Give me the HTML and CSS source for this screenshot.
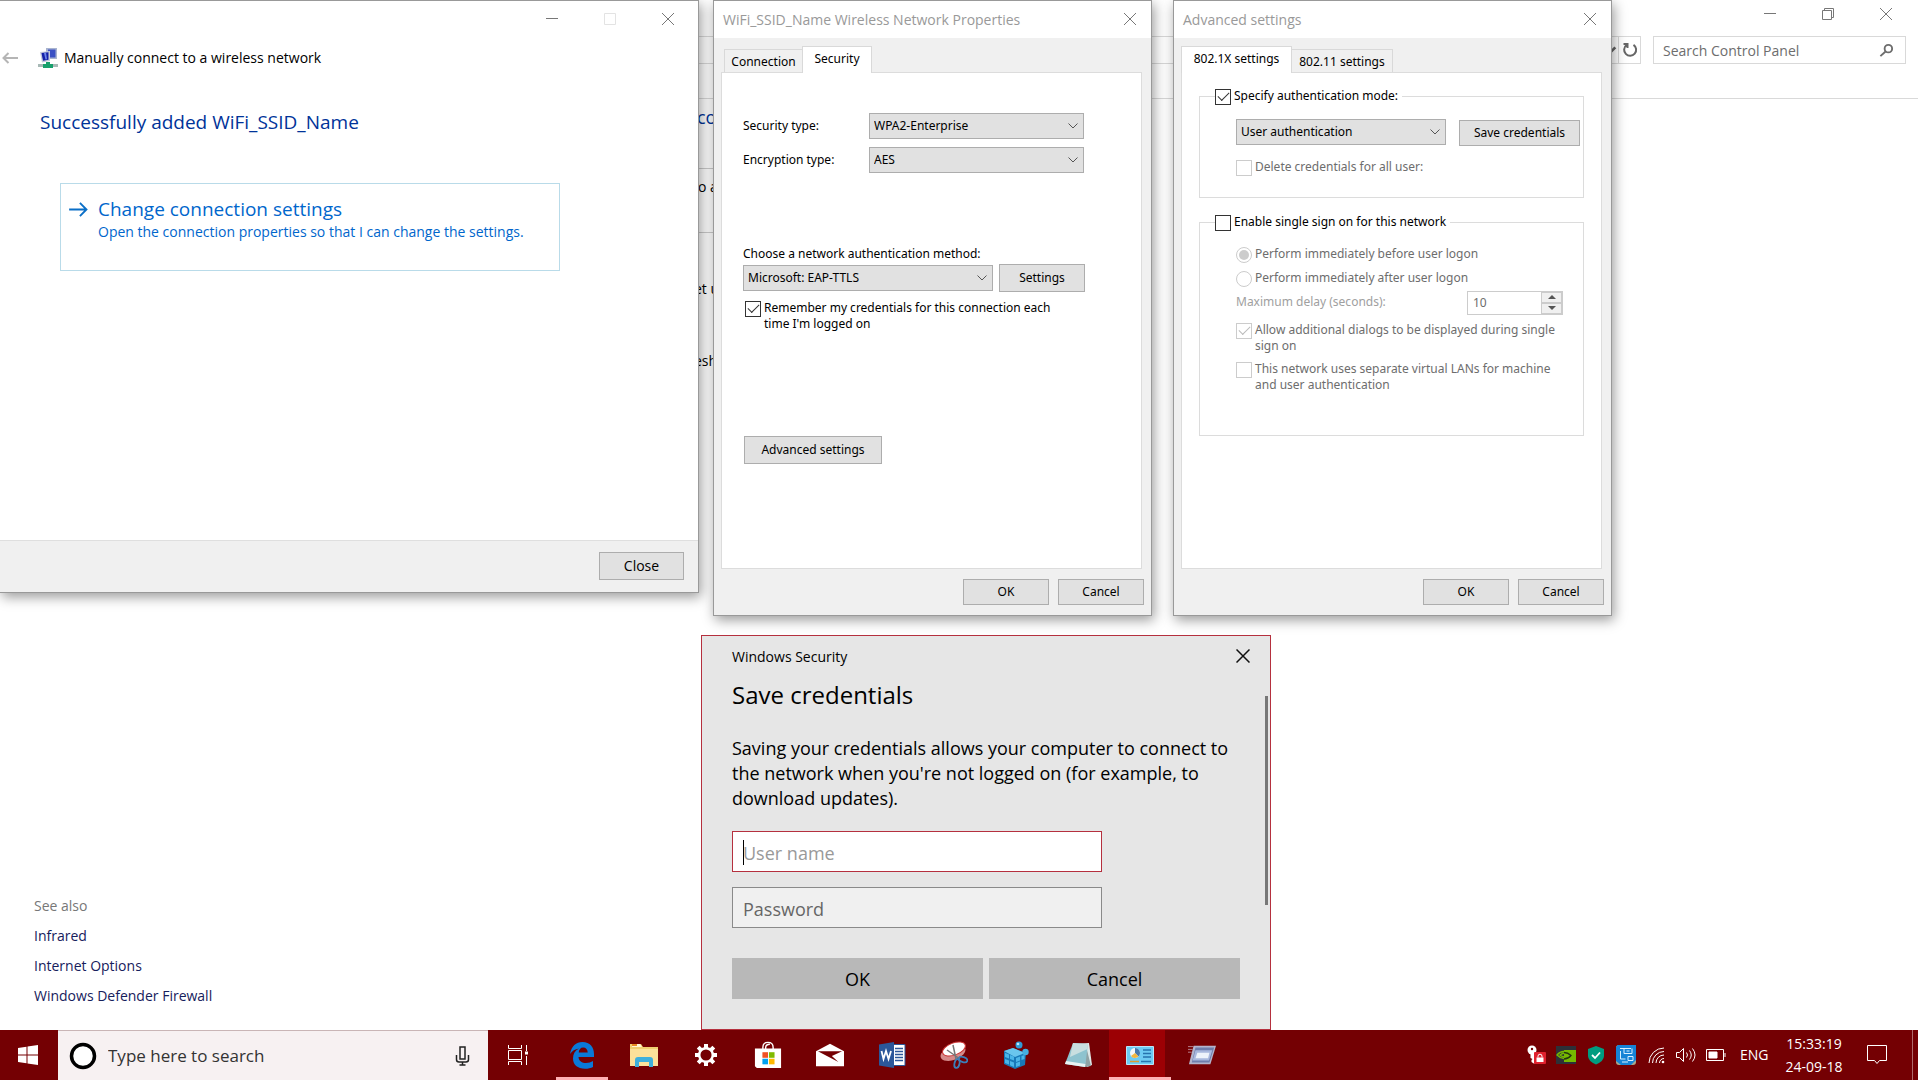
FILE: index.html
```html
<!DOCTYPE html>
<html lang="en">
<head>
<meta charset="utf-8">
<title>Wireless network setup</title>
<link rel="stylesheet" href="styles.css">
</head>
<body>
<main class="desktop">

  <section class="explorer" aria-label="Control Panel">
    <header class="explorer-head">
      <div class="caption">
        <button class="cap" aria-label="Minimise"><svg viewBox="0 0 12 12"><path d="M0 5.500h12"/></svg></button>
        <button class="cap" aria-label="Restore"><svg viewBox="0 0 12 12"><path d="M.5 2.500h9v9h-9zM2.500 2.500v-2h9v9h-2"/></svg></button>
        <button class="cap" aria-label="Close window"><svg viewBox="0 0 12 12"><path d="M0 0l12 12M12 0L0 12"/></svg></button>
      </div>
      <div class="address-row">
        <div class="address">
          <button class="addr-btn history" aria-label="Previous locations"><svg viewBox="0 0 12 12"><path d="M2 4l4 4 4-4"/></svg></button>
          <button class="addr-btn refresh" aria-label="Refresh"><svg viewBox="0 0 16 16"><path d="M11.500 2.800A6 6 0 1 1 4.500 3M1.500 2h4v4"/></svg></button>
        </div>
        <label class="search"><input type="text" placeholder="Search Control Panel" aria-label="Search Control Panel">
          <svg viewBox="0 0 16 16"><circle cx="10" cy="6" r="4"/><path d="M7 9l-5.500 5"/></svg></label>
      </div>
    </header>
    <div class="explorer-body">
      <nav class="see-also" aria-labelledby="see-also">
        <h2 id="see-also">See also</h2>
        <a href="#">Infrared</a>
        <a href="#">Internet Options</a>
        <a href="#">Windows Defender Firewall</a>
      </nav>
      <div class="network">
        <h1>co</h1>
        <p class="net-row first">o a</p>
        <p class="net-row second">et u</p>
        <p class="net-row third">esh</p>
      </div>
    </div>
  </section>

  <section class="window wizard">
    <div class="caption">
      <button class="cap" aria-label="Minimise"><svg viewBox="0 0 12 12"><path d="M0 5.500h12"/></svg></button>
      <button class="cap" disabled aria-label="Maximise"><svg viewBox="0 0 12 12"><path d="M.5.5h11v11H.5z"/></svg></button>
      <button class="cap" aria-label="Close wizard"><svg viewBox="0 0 12 12"><path d="M0 0l12 12M12 0L0 12"/></svg></button>
    </div>
    <div class="wizard-title">
      <button class="back" disabled aria-label="Back"><svg viewBox="0 0 16 12"><path d="M16 6H1M6.500 1l-5 5 5 5"/></svg></button>
      <svg class="net-icon" viewBox="0 0 20 20"><path d="M8 0h11v11H8z" fill="#a9b4cf"/><path d="M10 1.500h7.500v8H10z" fill="#3a50c4"/><path d="M2 4l10-1v10l-8 1.500z" fill="#c5cbdc"/><path d="M3.500 5l7-.8v7.600l-5.500 1z" fill="#1420a8"/><path d="M6 5l2-.3 1 6.500-1.500.3z" fill="#6e86ea"/><path d="M0 16h20v3H0z" fill="#a8b9b6"/><path d="M8 14h4v2h3v4H5v-4h3z" fill="#18a06c"/></svg>
      <span>Manually connect to a wireless network</span>
    </div>
    <div class="wizard-body">
      <h2>Successfully added WiFi_SSID_Name</h2>
      <button class="command">
        <svg viewBox="0 0 20 16"><path d="M0 8h18M11.500 1l7 7-7 7"/></svg>
        <span class="command-text"><span class="command-title">Change connection settings</span>
        <span>Open the connection properties so that I can change the settings.</span></span>
      </button>
    </div>
    <footer><button class="btn">Close</button></footer>
  </section>

  <section class="window props network-props">
    <header><h2>WiFi_SSID_Name Wireless Network Properties</h2>
      <button class="cap" aria-label="Close properties"><svg viewBox="0 0 12 12"><path d="M0 0l12 12M12 0L0 12"/></svg></button></header>
    <div class="tabs" role="tablist">
      <button class="tab" role="tab">Connection</button>
      <button class="tab selected" role="tab" aria-selected="true">Security</button>
    </div>
    <div class="panel security">
      <div class="pairs">
        <label for="sec">Security type:</label><select id="sec"><option>WPA2-Enterprise</option></select>
        <label for="enc">Encryption type:</label><select id="enc"><option>AES</option></select>
      </div>
      <label class="method-label" for="method">Choose a network authentication method:</label>
      <div class="method">
        <select id="method"><option>Microsoft: EAP-TTLS</option></select>
        <button class="btn">Settings</button>
      </div>
      <label class="check"><input type="checkbox" checked><span>Remember my credentials for this connection each time I'm logged on</span></label>
      <button class="btn advanced">Advanced settings</button>
    </div>
    <footer><button class="btn">OK</button><button class="btn">Cancel</button></footer>
  </section>

  <section class="window props advanced-props">
    <header><h2>Advanced settings</h2>
      <button class="cap" aria-label="Close advanced settings"><svg viewBox="0 0 12 12"><path d="M0 0l12 12M12 0L0 12"/></svg></button></header>
    <div class="tabs" role="tablist">
      <button class="tab selected" role="tab" aria-selected="true">802.1X settings</button>
      <button class="tab" role="tab">802.11 settings</button>
    </div>
    <div class="panel modes">
      <fieldset class="auth">
        <legend><label class="check"><input type="checkbox" checked><span>Specify authentication mode:</span></label></legend>
        <div class="mode">
          <select aria-label="Authentication mode"><option>User authentication</option></select>
          <button class="btn">Save credentials</button>
        </div>
        <label class="check off"><input type="checkbox" disabled><span>Delete credentials for all user:</span></label>
      </fieldset>
      <fieldset class="sso">
        <legend><label class="check"><input type="checkbox"><span>Enable single sign on for this network</span></label></legend>
        <label class="check off"><input type="radio" name="when" checked disabled><span>Perform immediately before user logon</span></label>
        <label class="check off"><input type="radio" name="when" disabled><span>Perform immediately after user logon</span></label>
        <div class="delay">
          <label for="delay">Maximum delay (seconds):</label>
          <div class="spinner">
            <input id="delay" type="text" value="10" disabled>
            <span class="steps"><button disabled aria-label="More">
              <svg viewBox="0 0 8 4"><path d="M0 4l4-4 4 4z"/></svg></button><button disabled aria-label="Less">
              <svg viewBox="0 0 8 4"><path d="M0 0l4 4 4-4z"/></svg></button></span>
          </div>
        </div>
        <label class="check off"><input type="checkbox" checked disabled><span>Allow additional dialogs to be displayed during single sign on</span></label>
        <label class="check off"><input type="checkbox" disabled><span>This network uses separate virtual LANs for machine and user authentication</span></label>
      </fieldset>
    </div>
    <footer><button class="btn">OK</button><button class="btn">Cancel</button></footer>
  </section>

  <section class="credentials">
    <header><span>Windows Security</span>
      <button class="cap" aria-label="Close Windows Security"><svg viewBox="0 0 14 14"><path d="M.5.5l13 13M13.500.5l-13 13"/></svg></button></header>
    <h2>Save credentials</h2>
    <p>Saving your credentials allows your computer to connect to the network when you're not logged on (for example, to download updates).</p>
    <label class="field focused"><input type="text" placeholder="User name" aria-label="User name"></label>
    <label class="field"><input type="password" placeholder="Password" aria-label="Password"></label>
    <div class="choices"><button>OK</button><button>Cancel</button></div>
    <i class="scroll-thumb"></i>
  </section>
</main>

<footer class="taskbar">
  <button class="start" aria-label="Start"><svg viewBox="0 0 20 20"><path d="M0 3l8.500-1.200v7.700H0zM9.500 1.600L20 0v9.500H9.500zM0 10.500h8.500v7.700L0 17zM9.500 10.500H20V20L9.500 18.400z" fill="#fff"/></svg></button>
  <label class="task-search">
    <svg class="cortana" viewBox="0 0 28 28"><circle cx="14" cy="14" r="11.500" fill="#fff" stroke="#000" stroke-width="3.500"/></svg>
    <input type="text" placeholder="Type here to search" aria-label="Type here to search">
    <svg class="mic" viewBox="0 0 14 20"><path d="M4.500 1h5v12h-5zM1 9v4.500q0 2.500 2.500 2.500h7q2.500 0 2.500-2.500V9M7 16v3M4 19h6"/></svg>
  </label>
  <div class="apps">
    <button class="task-view" aria-label="Task view"><svg viewBox="0 0 22 20"><path d="M1.500 5.500h13v9h-13zM1.500 0v3.500h13V0M1.500 20v-3.500h13V20M19.500 0v6M19.500 11v9" fill="none" stroke="#fff"/><path d="M18 6.500h3v3h-3z" fill="#fff"/></svg></button>
    <button class="app running" aria-label="Edge"><svg viewBox="0 0 28 28"><path d="M2 13C3.500 5 8 1 14.500 1 22 1 26 6 26 13v3H10.500c.3 4 3.500 6 7.500 6 2.800 0 5-.7 7-2v6c-2 1.200-5 1.800-8 1.800C9.500 27.800 5 23.500 5 17.500c0-4.500 2-8 6-10C7 8 4 10 2 13zm8.700-1.500h9c0-3-1.700-5-4.500-5s-4.200 2-4.500 5z" fill="#0a79d8"/></svg></button>
    <button class="app" aria-label="File Explorer"><svg viewBox="0 0 28 28"><path d="M0 3h11l2 3h15v19H0z" fill="#f0cf72"/><path d="M2 3h8l2 3H2z" fill="#fff5d5"/><path d="M2 3h5v2H2z" fill="#e88b24"/><path d="M0 8h28v17H0z" fill="#fce19a"/><path d="M5 26v-7q0-3 3-3h12q3 0 3 3v7h-4v-5H9v5z" fill="#3fb0dc"/></svg></button>
    <button class="app" aria-label="Settings"><svg viewBox="0 0 28 28"><circle cx="14" cy="14" r="6.800" fill="none" stroke="#fff" stroke-width="2.500"/><g stroke="#fff" stroke-width="4"><path d="M14 3v4M14 21v4M3 14h4M21 14h4M6.200 6.200l2.800 2.800M19 19l2.800 2.800M6.200 21.800L9 19M19 9l2.800-2.800"/></g></svg></button>
    <button class="app" aria-label="Store"><svg viewBox="0 0 30 30"><path d="M9.500 10V7q0-5.500 5.500-5.500T20.500 7v3M12.500 9V7q0-3.500 4.500-3.500" fill="none" stroke="#fff" stroke-width="1.500"/><path d="M1 8h28v21H3l-2-2z" fill="#fff"/><path d="M9 12h6v6H9z" fill="#f05125"/><path d="M16 12h6v6h-6z" fill="#7fba00"/><path d="M9 19h6v6H9z" fill="#00a1f1"/><path d="M16 19h6v6h-6z" fill="#ffb900"/></svg></button>
    <button class="app" aria-label="Mail"><svg viewBox="0 0 30 26"><path d="M0 9L15 1l15 8v16H0z" fill="#fff"/><path d="M2 9h26L17 14l7 6.500L2 9z" fill="#740003"/></svg></button>
    <button class="app" aria-label="Word"><svg viewBox="0 0 28 28"><path d="M14 3.500h13v21H14z" fill="#fff" stroke="#2b579a"/><path d="M17 7.500h8M17 10.500h8M17 13.500h8M17 16.500h8M17 19.500h8" stroke="#2b579a" stroke-width="1.500"/><path d="M1 3.500L16 1v26L1 24.500z" fill="#2b579a"/><path d="M3.500 10l2 8 2.500-8 2.500 8 2.500-8" fill="none" stroke="#fff" stroke-width="1.800"/></svg></button>
    <button class="app" aria-label="Snipping Tool"><svg viewBox="0 0 28 28"><ellipse cx="13" cy="12" rx="13" ry="7" transform="rotate(-20 13 12)" fill="#d58a8a"/><ellipse cx="14" cy="8" rx="12" ry="6" transform="rotate(-20 14 8)" fill="#fff" stroke="#c33"/><path d="M13 4l3 14M7 9l13 9" stroke="#777" stroke-width="1.500"/><g fill="none" stroke="#3b7fb8" stroke-width="1.800"><ellipse cx="17" cy="22.500" rx="2.500" ry="4.500" transform="rotate(12 17 22.500)"/><ellipse cx="23" cy="18.500" rx="4.500" ry="2.500" transform="rotate(20 23 18.500)"/></g></svg></button>
    <button class="app" aria-label="Registry Editor"><svg viewBox="0 0 28 28"><path d="M2 10l9-3 13 5-1 12-10 4-11-5z" fill="#1879b8"/><path d="M2 10l9-3 12 5-10 4z" fill="#6ac6ee"/><path d="M3 12l4 1.600v4L3 16zM8 14l4 1.500v4L8 18zM3 18l4 1.500v4L3 22zM8 20l4 1.500v4.500l-4-1.800zM14 17l4-1.500v4L14 21zM14 22l4-1.500v4L14 26zM19.500 15l3-1v4l-3 1z" fill="#4bb5e8"/><circle cx="17" cy="4" r="3.500" fill="#2f9bd6"/><circle cx="23.500" cy="11" r="3.200" fill="#46aee0"/><circle cx="16" cy="3" r="1.300" fill="#bfe8fa"/></svg></button>
    <button class="app" aria-label="Notepad"><svg viewBox="0 0 28 28"><path d="M10 3l15-1 3 22-5 2z" fill="#dfe8e8"/><path d="M22 5l5 20-6 1z" fill="#8fa3a6"/><path d="M9 2l15 1-3 23L1 23z" fill="#8ec3cf"/><path d="M9 2l15 1-.5 5L6 16z" fill="#c9dfe0"/><path d="M1 23l20 3 .5-3L2 20z" fill="#e9f2f2"/></svg></button>
    <button class="app running active" aria-label="Control Panel"><svg viewBox="0 0 28 28"><path d="M.5 5.500h27v18H.5z" fill="#6dcbf3" stroke="#b9e6f9"/><circle cx="9" cy="12" r="5" fill="#f2f7fa"/><path d="M9 12V7a5 5 0 0 1 3.500 8.500z" fill="#4478ad"/><path d="M9 12l3.500 3.500A5 5 0 0 1 5 15z" fill="#f3b73f"/><path d="M17 9h8M17 12.500h8M17 16h8" stroke="#2674ae" stroke-width="1.500"/><path d="M4 20.500h9" stroke="#d99b34" stroke-width="1.500"/><path d="M15 20.500h10" stroke="#2674ae" stroke-width="1.500"/></svg></button>
    <button class="app" aria-label="Run"><svg viewBox="0 0 30 28"><path d="M6 4h24l-6 20H1z" fill="#b3b4cc"/><path d="M8 6h20l-5 16H4z" fill="#6f7dab"/><path d="M8 9h18l-3.500 11H5z" fill="#a8b8de"/><path d="M10 11.500h13l-1.500 6H8z" fill="#eef3fb"/><path d="M0 5h6M0 8h5M0 11h4" stroke="#b98793"/></svg></button>
  </div>
  <div class="tray">
    <svg viewBox="0 0 20 20"><circle cx="6" cy="5" r="4.500" fill="#fff"/><path d="M4.500 8h4v11l-3-2v-2l1-1-2-1z" fill="#fff"/><circle cx="6" cy="4" r="1.200" fill="#740003"/><rect x="8" y="7" width="12" height="12" rx="1" fill="#e0202d"/><path d="M10.500 12.500h7V17h-7z" fill="#fff"/><path d="M12 12.500v-1.300a2 2 0 0 1 4 0v1.300" fill="none" stroke="#fff"/></svg>
    <svg viewBox="0 0 20 20"><path d="M0 1h20v18H0z" fill="#2d3038"/><path d="M8 5h12v12H8z" fill="#76b900"/><path d="M1 10q6-7 14 0-7 7-14 0zM4 10q4-3.500 8 0-4 3.500-8 0z" fill="none" stroke="#76b900" stroke-width="1.300"/><path d="M8 7.500q4 0 7 3-3 3.500-7 3.500" fill="none" stroke="#24340e" stroke-width="1.300"/></svg>
    <svg viewBox="0 0 20 20"><path d="M10 1l8 3v7q0 5-8 8.500Q2 16 2 11V4z" fill="#009c80"/><path d="M6 10l3 3 5-5.500" fill="none" stroke="#fff" stroke-width="1.800"/></svg>
    <svg viewBox="0 0 20 20"><rect width="20" height="20" rx="3" fill="#a8a98c"/><path d="M2 0h18v15l-5 5H5L0 16V2z" fill="#1683d6"/><path d="M4 3.500h11M8 3.500v5h8v-5M4.500 6v8h5M12 11.500h5v4h-5zM6 17h6M10.500 6h3" fill="none" stroke="#d9efff"/></svg>
    <svg viewBox="0 0 20 20" class="line"><path d="M3 18A15 15 0 0 1 18 3M6.500 18A11.500 11.500 0 0 1 18 6.500M10 18a8 8 0 0 1 8-8M13.500 18a4.500 4.500 0 0 1 4.500-4.500"/><circle cx="17" cy="17" r="1.300" fill="#fff" stroke="none"/></svg>
    <svg viewBox="0 0 20 20" class="line"><path d="M.5 7.500h3l4-4v13l-4-4h-3zM10.500 7.500q2 2.500 0 5M13.500 5.500q3.500 4.500 0 9M16.500 3.500q5 6.500 0 13"/></svg>
    <svg viewBox="0 0 20 20" class="line"><path d="M.5 4.500h17v11H.5zM19 8v4"/><path d="M3 7h8v6H3z" fill="#fff"/></svg>
    <span class="lang">ENG</span>
    <time class="clock"><span>15:33:19</span><span>24-09-18</span></time>
    <button class="notices" aria-label="Notifications"><svg viewBox="0 0 20 20"><path d="M.5.5h19v15h-7l-2.500 3-2.500-3h-7z" fill="none" stroke="#fff"/></svg></button>
    <span class="peek"></span>
  </div>
</footer>
</body>
</html>
```
FILE: styles.css
```css
* { box-sizing: border-box; }
html, body { margin: 0; }
body {
  display: flex;
  flex-direction: column;
  min-height: 100vh;
  overflow: hidden;
  background: #fff;
  color: #000;
  font: 14px/20px "Open Sans", "Noto Sans", sans-serif;
}
h1, h2, p, fieldset, legend { margin: 0; padding: 0; font-weight: 400; }
button, input, select { margin: 0; padding: 0; border: 0; border-radius: 0; background: none; color: inherit; font: inherit; }
svg { display: block; flex: none; }
a { color: inherit; text-decoration: none; }

.desktop { position: relative; flex: 1; display: flex; }

/* caption buttons */
.caption { display: flex; justify-content: flex-end; }
.cap { display: grid; place-items: center; width: 58px; height: 36px; }
.cap svg { width: 12px; height: 12px; fill: none; stroke: #777; stroke-width: 1; }
.cap:disabled svg { stroke: #e3e3e3; }

/* control panel behind the dialogs */
.explorer { flex: 1; display: flex; flex-direction: column; }
.explorer-head { height: 99px; border-bottom: 1px solid #d9d9d9; }
.explorer-head .cap { height: 28px; }
.explorer-head .caption { height: 36px; padding-right: 3px; }
.address-row { display: flex; gap: 12px; padding-right: 12px; }
.address { flex: 1; display: flex; justify-content: flex-end; height: 28px; border: 1px solid #d9d9d9; }
.addr-btn { display: grid; place-items: center; width: 22px; }
.addr-btn svg { width: 16px; height: 16px; fill: none; stroke: #666; stroke-width: 2; }
.history { padding-left: 6px; }
.refresh { border-left: 1px solid #d9d9d9; }
.search { display: flex; align-items: center; width: 253px; padding: 0 11px 0 9px; border: 1px solid #d9d9d9; }
.search input { flex: 1; min-width: 0; height: 26px; padding-top: 1px; outline: 0; }
.search input::placeholder { color: #6d6d6d; opacity: 1; }
.search svg { width: 15px; height: 15px; fill: none; stroke: #6d6d6d; stroke-width: 2; }
.explorer-body { flex: 1; display: flex; }
.see-also { width: 694px; display: flex; flex-direction: column; justify-content: flex-end; gap: 10px; padding: 0 34px 24px; color: #16205c; font-size: 14px; }
.see-also h2 { color: #777; font-size: 14px; }
.network { width: 24px; overflow: hidden; white-space: nowrap; }
.network h1 { height: 70px; padding: 6px 0 0 3px; border-bottom: 1px solid #ccc; color: #003399; font-size: 18px; line-height: 24px; }
.net-row.first { height: 64px; padding: 8px 0 0 4px; border-bottom: 1px solid #ccc; }
.net-row.second { padding-top: 46px; }
.net-row.third { padding-top: 52px; }

/* framed windows */
.window { position: absolute; top: 0; display: flex; flex-direction: column; border: 1px solid #999; box-shadow: 2px 4px 12px rgba(0, 0, 0, .4); background: #fff; }
.btn { height: 26px; border: 1px solid #adadad; background: #e1e1e1; text-align: center; }

.wizard { left: 0; width: 699px; height: 593px; border-left: 0; }
.wizard .caption { padding-right: 1px; }
.wizard-title { display: flex; align-items: center; height: 42px; padding-left: 2px; }
.back svg { width: 16px; height: 12px; fill: none; stroke: #b5b5b5; stroke-width: 2; }
.net-icon { width: 20px; height: 20px; margin: 0 6px 0 20px; }
.wizard-body { flex: 1; padding: 30px 0 0 40px; }
.wizard-body h2 { color: #003399; font-size: 19px; line-height: 26px; }
.command { display: flex; gap: 10px; width: 500px; height: 88px; margin: 48px 0 0 20px; padding: 12px 8px; border: 1px solid #b9dbe9; color: #0066cc; text-align: left; }
.command svg { width: 19px; height: 15px; margin-top: 6px; fill: none; stroke: #0a6fc7; stroke-width: 2; }
.command-text { display: flex; flex-direction: column; }
.command-title { font-size: 19px; line-height: 26px; }
.wizard footer { display: flex; justify-content: flex-end; height: 52px; padding: 11px 14px; border-top: 1px solid #dfdfdf; background: #f0f0f0; }
.wizard footer .btn { width: 85px; height: 28px; }

/* property sheets */
.props { width: 439px; height: 616px; background: #f0f0f0; font: 12px/16px "Noto Sans", "DejaVu Sans", sans-serif; }
.network-props { left: 713px; }
.advanced-props { left: 1173px; }
.props header { display: flex; justify-content: space-between; height: 37px; padding-left: 9px; background: #fff; }
.props header h2 { color: #999; font: 14px/37px "Open Sans", "Noto Sans", sans-serif; }
.props header .cap { width: 42px; }
.tabs { display: flex; align-items: flex-end; height: 34px; padding: 0 10px; }
.tab { width: 79px; height: 23px; padding-top: 2px; border: 1px solid #d9d9d9; border-bottom: 0; background: #f0f0f0; line-height: 16px; }
.tab.selected { z-index: 1; width: 70px; height: 27px; margin-bottom: -1px; padding: 0 0 2px; background: #fff; }
.tab:not(.selected) + .tab.selected { margin-left: -1px; }
.advanced-props .tab { width: 101px; }
.advanced-props .tab.selected { width: 111px; }
.tab.selected + .tab { border-left: 0; }
.advanced-props .tabs { padding: 0 7px; }
.panel { height: 498px; margin: 0 9px 0 7px; border: 1px solid #dcdcdc; background: #fff; }
.props footer { display: flex; justify-content: flex-end; gap: 9px; padding: 10px 7px; }
.props footer .btn { width: 86px; }

select {
  height: 26px;
  padding: 0 20px 0 4px;
  border: 1px solid #adadad;
  appearance: none;
  background: #e1e1e1 url("data:image/svg+xml,%3Csvg xmlns='http://www.w3.org/2000/svg' width='10' height='6'%3E%3Cpath d='M.5.5L5 5 9.500.5' fill='none' stroke='%23555'/%3E%3C/svg%3E") no-repeat right 5px center;
}
.security { display: flex; flex-direction: column; align-items: flex-start; padding: 40px 21px 0; }
.pairs { display: grid; grid-template-columns: 126px 215px; align-items: center; gap: 8px 0; }
.method-label { margin-top: 73px; }
.method { display: flex; align-items: center; gap: 6px; margin: 2px 0 9px; }
.method select { width: 250px; }
.method .btn { width: 86px; height: 28px; }
.security .check { width: 320px; padding-left: 2px; }
.advanced { width: 138px; height: 28px; margin: 104px 0 0 1px; }

.check { display: flex; gap: 3px; }
.check span { margin-top: -1px; }
.check input { flex: none; position: relative; width: 16px; height: 16px; border: 1px solid #333; appearance: none; background: #fff; }
.check input[type="radio"] { border-radius: 50%; }
.check input:disabled { border-color: #ccc; }
.check input[type="checkbox"]:checked::before { content: ""; position: absolute; left: 2px; top: 2px; width: 10px; height: 5px; border: solid #333; border-width: 0 0 1px 1px; transform: rotate(-45deg); }
.check input[type="checkbox"]:disabled:checked::before { border-color: #bbb; }
.check input[type="radio"]:checked::before { content: ""; position: absolute; inset: 2px; border-radius: 50%; background: #ccc; }
.off { color: #6d6d6d; }

.modes { padding: 16px 17px 0; }
fieldset { display: block; min-width: 0; padding: 0 0 0 36px; border: 1px solid #dcdcdc; }
legend { margin-left: -21px; padding-right: 4px; }
legend .check { height: 16px; }
.auth { height: 109px; padding-top: 14px; }
.mode { display: flex; gap: 13px; margin-bottom: 14px; }
.mode select { width: 210px; }
.mode .btn { width: 121px; margin-top: 1px; }
.sso { height: 221px; margin-top: 17px; padding: 16px 20px 0 36px; }
.sso > .check { margin-bottom: 8px; }
.delay { display: flex; justify-content: space-between; margin: -4px 0 8px; color: #a0a0a0; line-height: 22px; }
.spinner { display: flex; width: 96px; height: 24px; border: 1px solid #ccc; }
.spinner input { flex: 1; min-width: 0; padding-left: 5px; color: #6d6d6d; }
.steps { display: flex; flex-direction: column; width: 21px; }
.steps button { flex: 1; display: grid; place-items: center; border: 1px solid #ccc; background: #f0f0f0; }
.steps svg { width: 8px; height: 4px; fill: #555; }

/* credentials prompt */
.credentials { position: absolute; left: 701px; bottom: 0; width: 570px; height: 395px; padding: 0 30px; border: 1px solid #b5303e; background: #e6e6e6; font-size: 18px; line-height: 25px; }
.credentials header { display: flex; justify-content: space-between; align-items: center; height: 40px; margin-right: -10px; font-size: 14px; }
.credentials .cap { width: 14px; }
.credentials .cap svg { width: 14px; height: 14px; stroke: #111; stroke-width: 1.500; }
.credentials h2 { font-size: 24px; line-height: 38px; }
.credentials p { margin: 22px 0 20px; }
.field { position: relative; display: block; width: 370px; height: 41px; margin-bottom: 15px; }
.field input { width: 100%; height: 100%; padding: 3px 10px 0; border: 1px solid #8a8a8a; background: #f0f0f0; outline: 0; }
.field input::placeholder { color: #666; opacity: 1; }
.focused input { border-color: #b5303e; background: #fff; }
.focused input::placeholder { color: #999; }
.focused::after { content: ""; position: absolute; left: 11px; top: 9px; width: 1px; height: 25px; background: #000; }
.choices { display: flex; gap: 6px; padding-top: 15px; }
.choices button { flex: 1; height: 41px; padding-top: 1px; background: #b8b8b8; }
.scroll-thumb { position: absolute; right: 2px; top: 60px; width: 3px; height: 209px; background: #777; }

/* taskbar */
.taskbar { display: flex; height: 50px; background: #740003; color: #fff; }
.start { display: grid; place-items: center; width: 58px; padding-right: 2px; }
.start svg { width: 20px; height: 20px; }
.task-search { display: flex; align-items: center; width: 430px; padding: 0 18px 0 11px; border-top: 1px solid #c9b5b6; background: #f7f1f2; }
.cortana { width: 28px; height: 28px; margin-right: 11px; }
.task-search input { flex: 1; outline: 0; font-size: 17px; }
.task-search input::placeholder { color: #333; opacity: 1; }
.mic { width: 15px; height: 20px; fill: none; stroke: #222; stroke-width: 1.500; }
.apps { flex: 1; display: flex; }
.apps button { display: grid; place-items: center; width: 62px; }
.apps .task-view { width: 63px; padding-right: 3px; }
.apps svg { width: 28px; height: 28px; }
.apps .task-view svg { width: 22px; height: 20px; }
.apps .running { background: linear-gradient(#ffb0b4, #ffb0b4) 50% 100% / 52px 3px no-repeat; }
.apps .active { background: linear-gradient(#ffb0b4, #ffb0b4) 0 100% / 100% 3px no-repeat, linear-gradient(#9c0004, #9c0004) 0 0 / 56px 100% no-repeat; }
.tray { display: flex; align-items: center; }
.tray > svg { width: 20px; height: 20px; margin-right: 10px; }
.line { fill: none; stroke: #fff; stroke-width: 1; }
.lang { width: 42px; padding-left: 4px; }
.clock { display: flex; flex-direction: column; width: 72px; text-align: center; line-height: 23px; }
.notices { width: 62px; display: grid; place-items: center; padding-right: 8px; }
.notices svg { width: 20px; height: 20px; }
.peek { width: 6px; height: 100%; border-left: 1px solid #b06a6c; }
```
